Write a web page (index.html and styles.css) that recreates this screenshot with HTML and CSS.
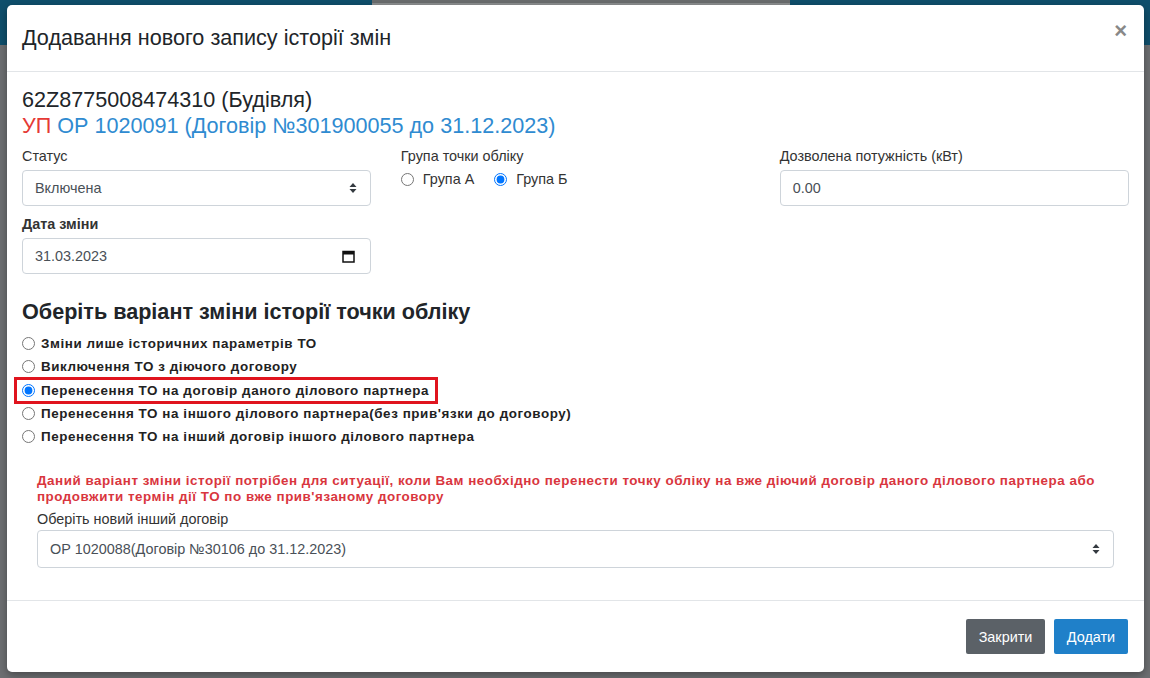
FILE: index.html
```html
<!DOCTYPE html>
<html lang="uk">
<head>
<meta charset="utf-8">
<title>Додавання нового запису історії змін</title>
<link rel="stylesheet" href="styles.css">
</head>
<body>
<div class="page-bg">
  <div class="logo-peek"></div>
</div>
<div class="modal">
  <div class="modal-header">
    <h5 class="modal-title">Додавання нового запису історії змін</h5>
    <span class="close">&times;</span>
  </div>
  <div class="modal-body">
    <div class="tp-name">62Z8775008474310 (Будівля)</div>
    <div class="tp-contract"><span class="red">УП</span> ОР 1020091 (Договір №301900055 до 31.12.2023)</div>
    <div class="row">
      <div class="col">
        <label class="lbl">Статус</label>
        <div class="control select"><span>Включена</span>
          <svg class="arrows" width="8" height="12" viewBox="0 0 8 12"><path d="M4 1 L7.5 5 H0.5 Z M4 11 L0.5 7 H7.5 Z" fill="#343a40"/></svg>
        </div>
        <label class="lbl bold">Дата зміни</label>
        <div class="control"><span>31.03.2023</span>
          <svg class="cal" width="13" height="13" viewBox="0 0 13 13"><rect x="1" y="1.5" width="11" height="10.5" fill="none" stroke="#111" stroke-width="1.5"/><rect x="1" y="1.5" width="11" height="3" fill="#111"/></svg>
        </div>
      </div>
      <div class="col">
        <label class="lbl">Група точки обліку</label>
        <div class="inline-radios">
          <label class="rlabel"><input type="radio" name="grp"> Група А</label>
          <label class="rlabel"><input type="radio" name="grp" checked> Група Б</label>
        </div>
      </div>
      <div class="col">
        <label class="lbl">Дозволена потужність (кВт)</label>
        <div class="control"><span>0.00</span></div>
      </div>
    </div>

    <h4 class="section-title">Оберіть варіант зміни історії точки обліку</h4>
    <div class="options">
      <label class="opt"><input type="radio" name="var"> Зміни лише історичних параметрів ТО</label>
      <label class="opt"><input type="radio" name="var"> Виключення ТО з діючого договору</label>
      <label class="opt highlighted"><input type="radio" name="var" checked> Перенесення ТО на договір даного ділового партнера</label>
      <label class="opt"><input type="radio" name="var"> Перенесення ТО на іншого ділового партнера(без прив'язки до договору)</label>
      <label class="opt"><input type="radio" name="var"> Перенесення ТО на інший договір іншого ділового партнера</label>
    </div>

    <div class="variant">
      <p class="hint">Даний варіант зміни історії потрібен для ситуації, коли Вам необхідно перенести точку обліку на вже діючий договір даного ділового партнера або продовжити термін дії ТО по вже прив'язаному договору</p>
      <label class="lbl">Оберіть новий інший договір</label>
      <div class="control select tall"><span>ОР 1020088(Договір №30106 до 31.12.2023)</span>
        <svg class="arrows" width="8" height="12" viewBox="0 0 8 12"><path d="M4 1 L7.5 5 H0.5 Z M4 11 L0.5 7 H7.5 Z" fill="#343a40"/></svg>
      </div>
    </div>
  </div>
  <div class="modal-footer">
    <button class="btn btn-gray">Закрити</button>
    <button class="btn btn-blue">Додати</button>
  </div>
</div>
</body>
</html>
```
FILE: styles.css
```css
html, body {
  margin: 0;
  padding: 0;
}
body {
  width: 1150px;
  height: 678px;
  overflow: hidden;
  font-family: "Liberation Sans", Arial, sans-serif;
  color: #212529;
  background: linear-gradient(to bottom, #0f4f6c 0, #0f4f6c 45px, #6d6f72 45px, #6d6f72 100%);
  position: relative;
}
.page-bg {
  position: absolute;
  left: 0;
  top: 0;
  width: 1150px;
  height: 45px;
}
.logo-peek {
  position: absolute;
  left: 372px;
  top: 0;
  width: 418px;
  height: 6px;
  background: linear-gradient(to bottom, #6a6d6e 0, #6a6d6e 3px, #8d9091 3px);
}
.modal {
  position: absolute;
  left: 7px;
  top: 5px;
  width: 1137px;
  height: 667px;
  background: #fff;
  border-radius: 5px;
  box-shadow: 0 3px 9px rgba(0,0,0,0.35);
  display: flex;
  flex-direction: column;
  box-sizing: border-box;
}
.modal-header {
  height: 67px;
  box-sizing: border-box;
  border-bottom: 1px solid #e2e5e8;
  display: flex;
  align-items: center;
  justify-content: space-between;
  padding: 0 16px 0 15px;
}
.modal-title {
  margin: 0;
  font-size: 21.6px;
  font-weight: normal;
  color: #212529;
  line-height: 30px;
}
.close {
  font-size: 22px;
  font-weight: bold;
  color: #888;
  line-height: 1;
  margin-top: -14px;
  margin-right: 1px;
}
.modal-body {
  flex: 1;
  padding: 15px 15px 0 15px;
}
.tp-name {
  font-size: 21.6px;
  line-height: 26px;
  color: #212529;
}
.tp-contract {
  font-size: 21.6px;
  line-height: 26px;
  color: #2f8bd1;
}
.red { color: #e53935; }
.row {
  display: grid;
  grid-template-columns: 1fr 1fr 1fr;
  column-gap: 29.5px;
  margin-top: 7px;
}
.lbl {
  display: block;
  font-size: 14.4px;
  line-height: 20px;
  color: #333;
  margin-bottom: 4px;
}
.bold { font-weight: bold; }
.control {
  height: 36px;
  box-sizing: border-box;
  border: 1px solid #ced4da;
  border-radius: 4px;
  display: flex;
  align-items: center;
  justify-content: space-between;
  padding: 0 13px 0 12px;
  font-size: 14.4px;
  color: #495057;
  margin-bottom: 8px;
}
.control.tall { height: 38px; }
.cal { margin-right: 2px; }
.inline-radios {
  display: flex;
  gap: 20px;
  margin-top: 5px;
}
.rlabel {
  font-size: 14.4px;
  color: #333;
  display: flex;
  align-items: center;
  gap: 3px;
}
input[type=radio] {
  width: 13px;
  height: 13px;
  margin: 0 6px 0 0;
  accent-color: #0075ff;
}
.section-title {
  font-size: 21.6px;
  line-height: 26px;
  font-weight: bold;
  margin: 17px 0 0 0;
  color: #212529;
}
.options {
  margin-top: 7px;
  display: flex;
  flex-direction: column;
}
.opt {
  height: 23.3px;
  display: flex;
  align-items: center;
  font-size: 13.4px;
  font-weight: bold;
  color: #222;
  letter-spacing: 0.58px;
  position: relative;
}
.highlighted::before {
  content: "";
  position: absolute;
  left: -8px;
  top: -2px;
  width: 424px;
  height: 27px;
  border: 3px solid #e0141e;
  box-sizing: border-box;
}
.variant {
  padding: 25px 15px 0 15px;
}
.hint {
  margin: 0;
  color: #d9363e;
  font-size: 13.4px;
  font-weight: bold;
  line-height: 16px;
  letter-spacing: 0.52px;
}
.variant .lbl { margin-top: 4px; margin-bottom: 1px; }
.modal-footer {
  height: 72px;
  box-sizing: border-box;
  border-top: 1px solid #e2e5e8;
  display: flex;
  justify-content: flex-end;
  align-items: center;
  gap: 9px;
  padding: 0 16px 0 15px;
}
.btn {
  height: 35px;
  border: none;
  border-radius: 2px;
  font-family: "Liberation Sans", Arial, sans-serif;
  font-size: 14.4px;
  color: #fff;
  padding: 0 10px;
}
.btn-gray { background: #5b6167; width: 79px; }
.btn-blue { background: #1f80c9; width: 74px; }
```
